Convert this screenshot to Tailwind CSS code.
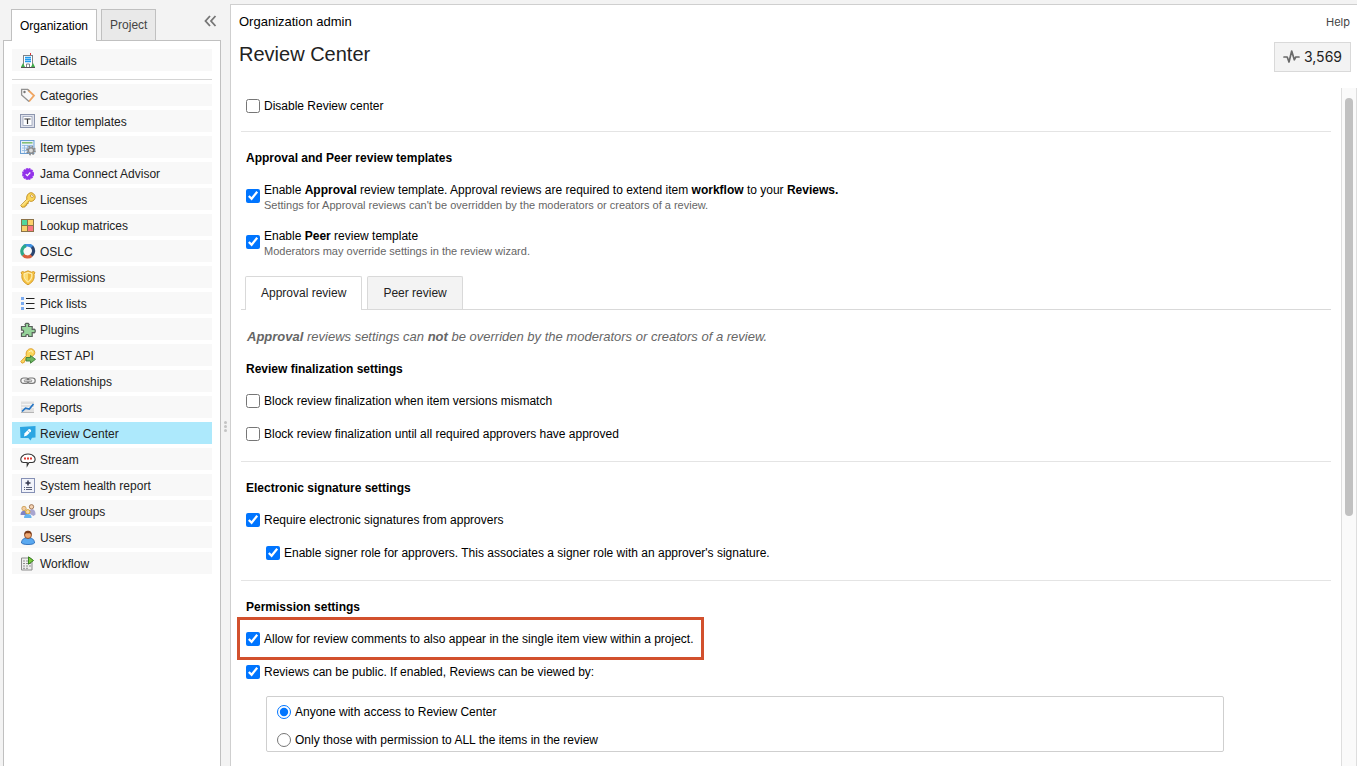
<!DOCTYPE html>
<html lang="en">
<head>
    <meta charset="UTF-8">
    <meta name="viewport" content="width=device-width, initial-scale=1.0">
    <title>Organization admin - Review Center</title>
    <script src="https://cdn.jsdelivr.net/npm/@tailwindcss/browser@4"></script>
</head>
<body class="bg-[#f3f3f3] font-['Liberation_Sans',Arial,sans-serif] text-xs text-black">

<div class="flex h-screen overflow-hidden">

    <!-- Sidebar -->
    <aside class="w-[221px] shrink-0 pl-[3px] flex flex-col">
        <div class="h-10 shrink-0 flex items-end pl-2">
            <button type="button" class="relative z-10 -mb-px h-8 px-2 border border-b-0 border-[#c0c0c0] bg-white">Organization</button>
            <button type="button" class="ml-1 h-[31px] px-2 border border-b-0 border-[#c0c0c0] bg-[#e9e9e9] text-[#444]">Project</button>
            <button type="button" aria-label="Collapse" class="ml-auto mr-1 mb-3">
                <svg width="13" height="14" viewBox="0 0 13 14" fill="none" stroke="#757575" stroke-width="1.8"><path d="M6 2L1.500 7L6 12M11.500 2L7 7L11.500 12"/></svg>
            </button>
        </div>
        <nav class="flex-1 border border-b-0 border-[#c0c0c0] bg-white px-2 pt-2 text-[#222]">
            <a href="#" class="flex items-center gap-1 h-[22px] pt-px pl-2 bg-[#f8f8f8]">
                <svg width="16" height="16" viewBox="0 0 16 16"><path d="M10.500 0v2" stroke="#d33" stroke-width="1"/><rect x="3.500" y="2.500" width="9" height="12" fill="#fff" stroke="#7d8288"/><path d="M5 4.500h6M5 6.500h6M5 8.500h6" stroke="#1e9bf0" stroke-width="1.300"/><path d="M6.500 15v-4h3v4" fill="#fff" stroke="#7d8288"/><path d="M1 14l2-4 2 4zM11 14l2-4 2 4z" fill="#3fae49"/><path d="M1 14.500h14" stroke="#555"/></svg>
                Details
            </a>
            <hr class="mt-2 mb-1 border-[#d4d4d4]">
            <div class="flex flex-col gap-1">
                <a href="#" class="flex items-center gap-1 h-[22px] pt-px pl-2 bg-[#f8f8f8]">
                    <svg width="16" height="16" viewBox="0 0 16 16"><path d="M8 2L14 7.500 9 13.500" fill="none" stroke="#efa562" stroke-width="1.800"/><path d="M9 13.500L1.600 7V1.300h6L9.500 2.900" fill="none" stroke="#919191" stroke-width="1.300"/><circle cx="4.500" cy="4" r="1.200" fill="#777"/></svg>
                    Categories
                </a>
                <a href="#" class="flex items-center gap-1 h-[22px] pt-px pl-2 bg-[#f8f8f8]">
                    <svg width="16" height="16" viewBox="0 0 16 16"><rect x=".5" y=".5" width="14" height="13" fill="#dfe2ec" stroke="#8d96ae"/><rect x="3" y="2.500" width="9" height="9" fill="#fff" stroke="#8d96ae" stroke-width=".7"/><path d="M5 5.500V5h5V5.500M7.500 5v5" fill="none" stroke="#333" stroke-width="1.200"/></svg>
                    Editor templates
                </a>
                <a href="#" class="flex items-center gap-1 h-[22px] pt-px pl-2 bg-[#f8f8f8]">
                    <svg width="16" height="16" viewBox="0 0 16 16"><rect x=".5" y=".5" width="13.500" height="13" fill="#e7f0fa" stroke="#6b9fd4"/><path d="M2 2.800h10.500" stroke="#7ebd6e" stroke-width="1.500"/><path d="M2 5.500h11M2 8h11M2 10.500h11M4.500 5v8M7.500 5v8M10.500 5v8" stroke="#8fb7df" stroke-width=".8"/><circle cx="11" cy="10.500" r="4" fill="none" stroke="#888" stroke-width="1.800" stroke-dasharray="1.600 1.540"/><circle cx="11" cy="10.500" r="2.600" fill="#ddd" stroke="#8a8a8a" stroke-width="1.400"/></svg>
                    Item types
                </a>
                <a href="#" class="flex items-center gap-1 h-[22px] pt-px pl-2 bg-[#f8f8f8]">
                    <svg width="16" height="16" viewBox="0 0 16 16"><circle cx="8" cy="8" r="5.200" fill="#9333ea" stroke="#9333ea" stroke-width="1.600" stroke-dasharray="2 .720"/><path d="M5.800 8.200l1.500 1.500 3-3.200" fill="none" stroke="#fff" stroke-width="1.200"/></svg>
                    Jama Connect Advisor
                </a>
                <a href="#" class="flex items-center gap-1 h-[22px] pt-px pl-2 bg-[#f8f8f8]">
                    <svg width="16" height="16" viewBox="0 0 16 16"><path d="M10.500 .7c2-.4 4.600 1.800 4.700 4.200.1 2.200-1.700 4.400-4 4.500-.8 0-1.400-.2-1.900-.5L8 10l.3 1.400-1.600.3.100 1.500-1.500.2-.2 1.500L2 15.200.8 13.500l6-6.200c-.7-3 1-6.100 3.700-6.600z" fill="#fbd65b" stroke="#bd8a1e" stroke-width=".9"/><path d="M2 13.400l5.500-5.500" stroke="#fff0ad"/><ellipse cx="11.800" cy="4.200" rx="1.600" ry="1.100" transform="rotate(40 11.800 4.200)" fill="#fff" stroke="#bd8a1e" stroke-width=".7"/></svg>
                    Licenses
                </a>
                <a href="#" class="flex items-center gap-1 h-[22px] pt-px pl-2 bg-[#f8f8f8]">
                    <svg width="16" height="16" viewBox="0 0 16 16" stroke="#8c7349"><rect x="1.500" y="1.500" width="6" height="6" fill="#52d69b"/><rect x="7.500" y="1.500" width="6" height="6" fill="#fcd26a"/><rect x="1.500" y="7.500" width="6" height="6" fill="#fcd26a"/><rect x="7.500" y="7.500" width="6" height="6" fill="#fb7480"/></svg>
                    Lookup matrices
                </a>
                <a href="#" class="flex items-center gap-1 h-[22px] pt-px pl-2 bg-[#f8f8f8]">
                    <svg width="16" height="16" viewBox="0 0 16 16" fill="none" stroke-width="3.200"><path d="M4 2.500a5.800 5.800 0 0 1 8.500.8" stroke="#3f8fe0"/><path d="M12 2.800a5.800 5.800 0 0 1-1.300 9" stroke="#2b456f"/><path d="M11.500 11.500a5.800 5.800 0 0 1-8.500-.8" stroke="#d9603c"/><path d="M3.200 11A5.800 5.800 0 0 1 6 1.700" stroke="#2ba88a"/></svg>
                    OSLC
                </a>
                <a href="#" class="flex items-center gap-1 h-[22px] pt-px pl-2 bg-[#f8f8f8]">
                    <svg width="16" height="16" viewBox="0 0 16 16"><path d="M1 2.500l1.500-1 2 .7L8 .8l3.500 1.400 2-.7 1.500 1-1 2c1 5-2 8.300-6 10.300C4 12.800 1 9.500 2 4.500z" fill="#f6c343" stroke="#cf9524" stroke-width=".9"/><path d="M8 2.500L4 3.800c-.3 4.200 1.200 6.500 4 8.500 2.800-2 4.300-4.300 4-8.500z" fill="#fbdc74" stroke="#fff3c4" stroke-width=".9"/><path d="M8 3.500v7.500c2-1.700 3-3.500 3-6.800z" fill="#efb73a"/></svg>
                    Permissions
                </a>
                <a href="#" class="flex items-center gap-1 h-[22px] pt-px pl-2 bg-[#f8f8f8]">
                    <svg width="16" height="16" viewBox="0 0 16 16"><path d="M1 1h3v3H1zM1 6h3v3H1zM1 11h3v3H1z" fill="#7aaaf0"/><path d="M6 2.500h8.500M6 7.500h8.500M6 12.500h8.500" stroke="#222" stroke-width="1.100"/></svg>
                    Pick lists
                </a>
                <a href="#" class="flex items-center gap-1 h-[22px] pt-px pl-2 bg-[#f8f8f8]">
                    <svg width="16" height="16" viewBox="0 0 16 16"><path d="M1.500 4.500h4V3.300L5 2.500l1-1.200h2.200l1 1.200-.6.900v1.100h3.600v3h1l.8-.5 1.200 1v2l-1.200 1-.8-.5h-1v4H8.600v-1.200l-.8-.8H6.700l-.8.800v1.200H1.500V11h1.300l.8-.8V9l-.8-.9H1.500z" fill="#96d39a" stroke="#58605a" stroke-width="1.200"/></svg>
                    Plugins
                </a>
                <a href="#" class="flex items-center gap-1 h-[22px] pt-px pl-2 bg-[#f8f8f8]">
                    <svg width="16" height="16" viewBox="0 0 16 16"><path d="M10.500 .7c2-.2 4.200 1.500 4.300 3.700.1 2-1.700 4-4 4.500L8 9.800l-1.500 2-1.500.2-.6 2.300-2.400.9L.8 13.500l5.500-6C5.500 4 7.500 1 10.500 .7z" fill="#fbd65b" stroke="#dc9c2a" stroke-width=".9"/><path d="M8.500 4l3-1.500 1 2" fill="none" stroke="#fff5c9"/><path d="M6 9.500h4.500v-2l5 3.800-5 3.900v-2.200H6z" fill="#6cb65f" stroke="#3d7d38" stroke-width=".9"/></svg>
                    REST API
                </a>
                <a href="#" class="flex items-center gap-1 h-[22px] pt-px pl-2 bg-[#f8f8f8]">
                    <svg width="16" height="16" viewBox="0 0 16 16" fill="none"><rect x=".8" y="4" width="8" height="5.400" rx="2.700" stroke="#777" stroke-width="1.200"/><rect x="7.200" y="4" width="8" height="5.400" rx="2.700" stroke="#777" stroke-width="1.200"/><rect x="4.200" y="5.900" width="7.600" height="1.800" rx=".9" fill="#eee" stroke="#777" stroke-width=".8"/></svg>
                    Relationships
                </a>
                <a href="#" class="flex items-center gap-1 h-[22px] pt-px pl-2 bg-[#f8f8f8]">
                    <svg width="16" height="16" viewBox="0 0 16 16"><rect x="1" y="1.500" width="13" height="11.500" fill="#e0e0e0"/><path d="M1.500 4.500h12.500M1.500 7.500h12.500" stroke="#f6f6f6"/><path d="M1 12.500h13" stroke="#b5b5b5"/><path d="M2 11.500l3.500-3.300 3.800.8 4.200-5" fill="none" stroke="#2475c5" stroke-width="1.700"/></svg>
                    Reports
                </a>
                <a href="#" aria-current="page" class="flex items-center gap-1 h-[22px] pt-px pl-2 bg-[#ade9fc]">
                    <svg width="16" height="16" viewBox="0 0 16 16"><path d="M0 1L15.500 0V11.500l-3.500.3L10.500 14.500 8.300 12 .5 12z" fill="#2ba5e2"/><path d="M4 10.500l.6-3.300 4-4c1-.8 3.200 1 2.300 2.200l-4 4.200z" fill="#fff"/><path d="M7.500 4.400l2.300 2.200" stroke="#2ba5e2" stroke-width=".7"/></svg>
                    Review Center
                </a>
                <a href="#" class="flex items-center gap-1 h-[22px] pt-px pl-2 bg-[#f8f8f8]">
                    <svg width="16" height="16" viewBox="0 0 16 16"><path d="M3.500 10.500C.5 10.300 .2 6.700 1.800 4.700 3.200 2.800 5.500 2 8 2s4.800.8 6.200 2.700c1.500 2 1.200 5.600-2 5.800H9l-1.800 3.200V10.500z" fill="#fff" stroke="#333" stroke-width="1.100"/><path d="M4 6.500h2M7 6.500h2M10 6.500h2" stroke="#e23a32" stroke-width="1.900"/></svg>
                    Stream
                </a>
                <a href="#" class="flex items-center gap-1 h-[22px] pt-px pl-2 bg-[#f8f8f8]">
                    <svg width="16" height="16" viewBox="0 0 16 16"><rect x="1.500" y=".5" width="13" height="14" fill="#f1f3fa" stroke="#8590b5"/><path d="M8 2.500v5M5.500 5h5" stroke="#30354c" stroke-width="1.500"/><path d="M4 9.500h1M6 9.500h6M4 11.500h1M6 11.500h6" stroke="#565c75"/></svg>
                    System health report
                </a>
                <a href="#" class="flex items-center gap-1 h-[22px] pt-px pl-2 bg-[#f8f8f8]">
                    <svg width="16" height="16" viewBox="0 0 16 16"><path d="M.5 11c0-3 1.500-4.300 3.500-4.300S7.500 8 7.500 11z" fill="#7f83c4"/><path d="M9 9.500c0-3 1-4.300 3-4.300s3.500 1.500 3.500 5.300l-2 1.500z" fill="#a9a5cf"/><circle cx="4" cy="4.500" r="2.200" fill="#f3cda3" stroke="#c79a4c" stroke-width=".8"/><circle cx="11.500" cy="2.800" r="2.200" fill="#f5d3b1" stroke="#8d6242" stroke-width=".8"/><circle cx="7.800" cy="7.800" r="2.200" fill="#f7d9a8" stroke="#d9a62e" stroke-width="1"/><path d="M4 14c0-3 1.500-4 3.800-4s3.800 1 3.800 4z" fill="#65b3ee"/></svg>
                    User groups
                </a>
                <a href="#" class="flex items-center gap-1 h-[22px] pt-px pl-2 bg-[#f8f8f8]">
                    <svg width="16" height="16" viewBox="0 0 16 16"><path d="M1.500 13C1.500 9.500 4 7.700 8 7.700s6.500 1.800 6.500 5.300c-1.500 2-11.500 2-13 0z" fill="#5aa9f0" stroke="#2a6bb8" stroke-width=".9"/><circle cx="8" cy="5" r="3.500" fill="#efa873" stroke="#7a3a18" stroke-width=".8"/><path d="M4.500 4.800C4 2 5.800 .8 8 .8s4 1.200 3.500 4L10 3.200H6z" fill="#7a3a18"/></svg>
                    Users
                </a>
                <a href="#" class="flex items-center gap-1 h-[22px] pt-px pl-2 bg-[#f8f8f8]">
                    <svg width="16" height="16" viewBox="0 0 16 16"><path d="M1.500 2h9l1.500 1.500v10.500h-10.500z" fill="#eee" stroke="#8c8c8c"/><path d="M3 5h2M6 5h2M3 7.500h2M6 7.500h2M9 7.500h2M3 10h2M6 10h2M9 10h2M3 12.300h2M6 12.300h2" stroke="#8f8f8f"/><path d="M8.500 .8L13.500 4.500 8.500 8.200z" fill="#7ccc3c" stroke="#37801f" stroke-width="1"/></svg>
                    Workflow
                </a>
            </div>
        </nav>
    </aside>

    <!-- Splitter -->
    <div class="w-[9px] shrink-0 flex flex-col items-center justify-center gap-px pt-[86px]">
        <span class="size-[3px] rounded-full bg-[#c4c4c4]"></span>
        <span class="size-[3px] rounded-full bg-[#c4c4c4]"></span>
        <span class="size-[3px] rounded-full bg-[#c4c4c4]"></span>
    </div>

    <!-- Main panel -->
    <main class="flex-1 min-w-0 mt-1 flex flex-col border-l border-t border-[#cfcfcf] bg-white">
        <header class="h-[83px] shrink-0 flex justify-between pl-2 pr-1.5">
            <div>
                <div class="mt-[9px] h-4 leading-4 text-[13px]">Organization admin</div>
                <h1 class="mt-3 h-6 leading-6 text-xl text-[#222]">Review Center</h1>
            </div>
            <div class="flex flex-col items-end">
                <a href="#" class="mt-[9px] h-4 pr-px leading-4 font-[Inter] text-[11px] text-[#444]">Help</a>
                <button type="button" class="mt-3 h-[30px] px-2 flex items-center gap-1 border border-[#d9d9d9] bg-[#f3f3f3] font-[Inter] text-sm text-[#222]">
                    <svg width="17" height="16" viewBox="0 0 17 16" fill="none" stroke="#6a6a6a" stroke-width="1.700" stroke-linejoin="round" stroke-linecap="round"><path d="M1 8h3.200L6 13 8.700 2l2.600 8.800L12.800 8H16"/></svg>
                    3,569
                </button>
            </div>
        </header>

        <div class="flex-1 min-h-0 flex">
            <form class="flex-1 min-w-0 overflow-hidden px-2.5">

                <section class="pt-px pb-[9px] px-[5px] border-b border-[#e4e4e4]">
                    <label class="flex items-center gap-1 h-[33px]"><input type="checkbox" class="size-3.5">Disable Review center</label>
                </section>

                <section class="pt-[11px]">
                    <h2 class="h-[30px] px-[5px] flex items-center font-bold">Approval and Peer review templates</h2>
                    <label class="flex items-center gap-1 h-[46px] px-[5px]">
                        <input type="checkbox" checked class="size-3.5">
                        <span class="pt-[3px]">
                            <span class="block leading-4">Enable <b>Approval</b> review template. Approval reviews are required to extend item <b>workflow</b> to your <b>Reviews.</b></span>
                            <span class="block leading-[15px] text-[11px] text-[#666]">Settings for Approval reviews can't be overridden by the moderators or creators of a review.</span>
                        </span>
                    </label>
                    <label class="flex items-center gap-1 h-[46px] px-[5px]">
                        <input type="checkbox" checked class="size-3.5">
                        <span class="pt-[3px]">
                            <span class="block leading-4">Enable <b>Peer</b> review template</span>
                            <span class="block leading-[15px] text-[11px] text-[#666]">Moderators may override settings in the review wizard.</span>
                        </span>
                    </label>
                </section>

                <div class="mt-[11px] flex gap-[5px] pl-1 border-b border-[#d9d9d9]">
                    <button type="button" class="-mb-px h-[34px] px-[15px] pb-px border border-b-0 border-[#d9d9d9] rounded-t-xs bg-white text-[#222]">Approval review</button>
                    <button type="button" class="h-[33px] px-[15px] border border-b-0 border-[#d9d9d9] rounded-t-xs bg-[#f3f3f3] text-[#222]">Peer review</button>
                </div>

                <section class="pt-[11px] pb-[11px] px-[5px] border-b border-[#e4e4e4]">
                    <p class="h-8 pl-px flex items-center italic text-[#666] text-[13px]"><span><b>Approval</b> reviews settings can <b>not</b> be overriden by the moderators or creators of a review.</span></p>
                    <h2 class="h-[31px] flex items-center font-bold">Review finalization settings</h2>
                    <label class="flex items-center gap-1 h-[33px]"><input type="checkbox" class="size-3.5">Block review finalization when item versions mismatch</label>
                    <label class="flex items-center gap-1 h-[33px]"><input type="checkbox" class="size-3.5">Block review finalization until all required approvers have approved</label>
                </section>

                <section class="py-[11px] px-[5px] border-b border-[#e4e4e4]">
                    <h2 class="h-[30px] flex items-center font-bold">Electronic signature settings</h2>
                    <label class="flex items-center gap-1 h-[33px]"><input type="checkbox" checked class="size-3.5">Require electronic signatures from approvers</label>
                    <label class="flex items-center gap-1 h-[33px] pl-5"><input type="checkbox" checked class="size-3.5">Enable signer role for approvers. This associates a signer role with an approver's signature.</label>
                </section>

                <section class="pt-[11px] px-[5px]">
                    <h2 class="h-[30px] flex items-center font-bold">Permission settings</h2>
                    <div class="relative w-fit">
                        <label class="flex items-center gap-1 h-[33px]"><input type="checkbox" checked class="size-3.5">Allow for review comments to also appear in the single item view within a project.</label>
                        <div class="absolute -left-[9px] -right-2.5 -inset-y-[5px] border-3 border-[#d2502d] pointer-events-none"></div>
                    </div>
                    <label class="flex items-center gap-1 h-[33px]"><input type="checkbox" checked class="size-3.5">Reviews can be public. If enabled, Reviews can be viewed by:</label>
                    <div class="mt-2 ml-5 mr-[102px] px-2.5 pt-[5px] pb-px flex flex-col gap-2 border border-[#cfcfcf] rounded-xs">
                        <label class="flex items-center gap-1 h-5"><input type="radio" name="visibility" checked class="size-3.5">Anyone with access to Review Center</label>
                        <label class="flex items-center gap-1 h-5"><input type="radio" name="visibility" class="size-3.5">Only those with permission to ALL the items in the review</label>
                    </div>
                </section>
            </form>

            <!-- Scrollbar -->
            <div class="w-4 shrink-0 pt-2.5 px-[3px] border-x border-[#dedede] bg-[#fafafa]">
                <div class="h-5/8 w-2 rounded-full bg-[#c1c1c1]"></div>
            </div>
        </div>
    </main>
</div>

</body>
</html>
